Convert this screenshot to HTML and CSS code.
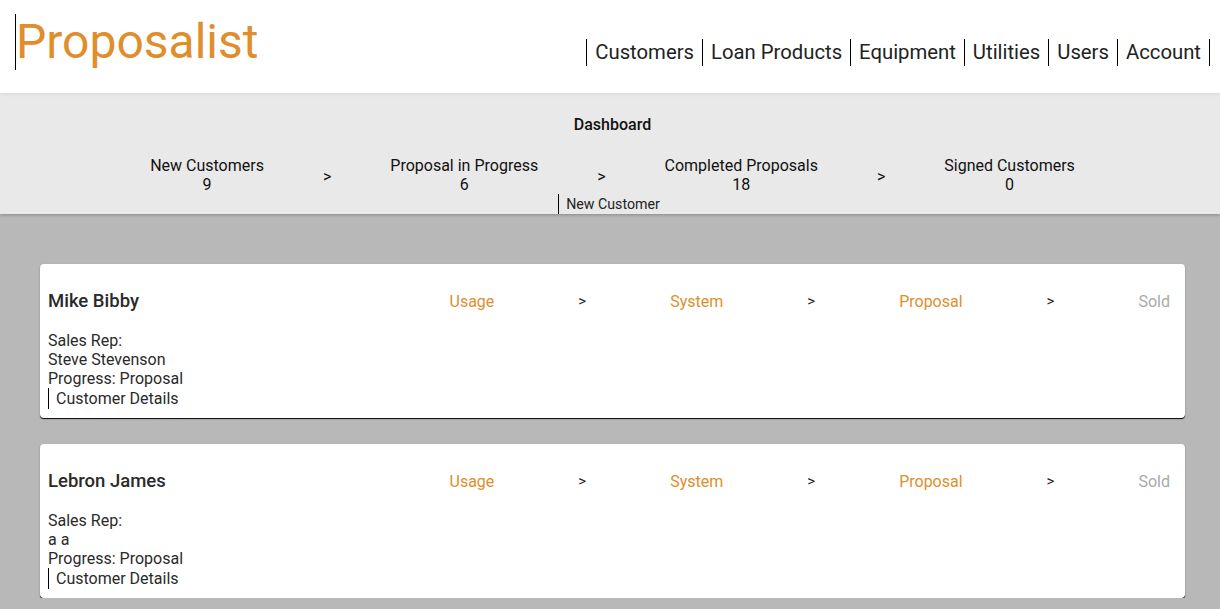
FILE: index.html
```html
<!DOCTYPE html>
<html lang="en">
<head>
<meta charset="utf-8">
<title>Proposalist</title>
<link rel="stylesheet" href="styles.css">
</head>
<body>
<header class="topbar">
  <h1 class="logo">Proposalist</h1>
  <nav class="nav">
    <a class="nav-link" href="#">Customers</a>
    <a class="nav-link" href="#">Loan Products</a>
    <a class="nav-link" href="#">Equipment</a>
    <a class="nav-link" href="#">Utilities</a>
    <a class="nav-link" href="#">Users</a>
    <a class="nav-link nav-link-last" href="#">Account</a>
  </nav>
</header>

<section class="dashboard">
  <h2 class="dash-title">Dashboard</h2>
  <div class="stats">
    <div class="stat"><div>New Customers</div><div>9</div></div>
    <div class="stat-arrow">&gt;</div>
    <div class="stat"><div>Proposal in Progress</div><div>6</div></div>
    <div class="stat-arrow">&gt;</div>
    <div class="stat"><div>Completed Proposals</div><div>18</div></div>
    <div class="stat-arrow">&gt;</div>
    <div class="stat"><div>Signed Customers</div><div>0</div></div>
  </div>
  <div class="new-row"><a class="new-link" href="#">New Customer</a></div>
</section>

<main class="cards">
  <article class="card">
    <div class="card-head">
      <h3 class="card-name">Mike Bibby</h3>
      <div class="steps">
        <span class="step step-done">Usage</span>
        <span class="step-arrow">&gt;</span>
        <span class="step step-done">System</span>
        <span class="step-arrow">&gt;</span>
        <span class="step step-done">Proposal</span>
        <span class="step-arrow">&gt;</span>
        <span class="step step-todo">Sold</span>
      </div>
    </div>
    <div class="card-body">
      <div>Sales Rep:</div>
      <div>Steve Stevenson</div>
      <div>Progress: Proposal</div>
      <a class="details-link" href="#">Customer Details</a>
    </div>
  </article>

  <article class="card">
    <div class="card-head">
      <h3 class="card-name">Lebron James</h3>
      <div class="steps">
        <span class="step step-done">Usage</span>
        <span class="step-arrow">&gt;</span>
        <span class="step step-done">System</span>
        <span class="step-arrow">&gt;</span>
        <span class="step step-done">Proposal</span>
        <span class="step-arrow">&gt;</span>
        <span class="step step-todo">Sold</span>
      </div>
    </div>
    <div class="card-body">
      <div>Sales Rep:</div>
      <div>a a</div>
      <div>Progress: Proposal</div>
      <a class="details-link" href="#">Customer Details</a>
    </div>
  </article>
</main>
</body>
</html>
```

FILE: styles.css
```css
* { box-sizing: border-box; }

html, body {
  margin: 0;
  padding: 0;
}

body {
  background: #b8b8b8;
  font-family: Roboto, "Liberation Sans", sans-serif;
  color: #222;
  font-size: 16px;
  overflow: hidden;
}

a { color: inherit; text-decoration: none; }

.topbar {
  position: relative;
  z-index: 2;
  height: 93px;
  background: #fff;
  display: flex;
  justify-content: space-between;
  align-items: flex-start;
  box-shadow: 0 1px 4px rgba(0, 0, 0, 0.08);
}

.logo {
  margin: 14px 0 0 15px;
  padding: 0;
  border-left: 1px solid #000;
  font-size: 48px;
  font-weight: 400;
  line-height: 56px;
  color: #e08e2c;
}

.nav {
  display: flex;
  margin: 39px 10px 0 0;
}

.nav-link {
  font-size: 20.3px;
  line-height: 27px;
  padding: 0 8px;
  border-left: 1px solid #000;
  color: #222;
}

.nav-link-last {
  border-right: 1px solid #000;
}

.dashboard {
  position: relative;
  z-index: 1;
  background: #e9e9e9;
  padding-top: 22px;
  box-shadow: 0 1px 3px rgba(0, 0, 0, 0.25);
}

.dash-title {
  margin: 0;
  text-align: center;
  font-size: 16px;
  font-weight: 500;
  line-height: 19px;
  color: #111;
  padding-left: 5px;
}

.stats {
  margin-top: 22px;
  display: flex;
  justify-content: center;
  align-items: center;
  gap: 59px;
  padding-left: 5px;
}

.stat {
  text-align: center;
  line-height: 19px;
  color: #111;
}

.stat-arrow {
  line-height: 19px;
  padding-top: 2px;
  color: #111;
}

.new-row {
  display: flex;
  justify-content: center;
  padding-right: 2px;
}

.new-link {
  font-size: 14.2px;
  line-height: 19px;
  padding: 1px 0 0 7px;
  border-left: 1px solid #000;
  color: #222;
}

.cards {
  padding: 50px 35px 0 40px;
  display: flex;
  flex-direction: column;
  gap: 26px;
}

.card {
  background: #fff;
  border-radius: 4px;
  padding: 27px 15px 9px 8px;
  box-shadow: 0 1px 0 #111, 0 1px 2px rgba(0, 0, 0, 0.3);
}

.card-head {
  display: flex;
  align-items: center;
  justify-content: space-between;
  height: 21px;
}

.card-name {
  margin: 0;
  font-size: 18.5px;
  font-weight: 500;
  line-height: 21px;
  color: #2a2a2a;
}

.steps {
  display: flex;
  align-items: center;
  gap: 84px;
  line-height: 21px;
}

.step-done { color: #e08e2c; }
.step-todo { color: #a9a9a9; }
.step-arrow { color: #222; font-size: 15px; }

.card-body {
  margin-top: 19px;
  line-height: 19px;
  color: #2a2a2a;
}

.details-link {
  display: inline-block;
  padding: 1px 0 1px 7px;
  border-left: 1px solid #000;
  line-height: 19px;
  color: #2a2a2a;
}
```
